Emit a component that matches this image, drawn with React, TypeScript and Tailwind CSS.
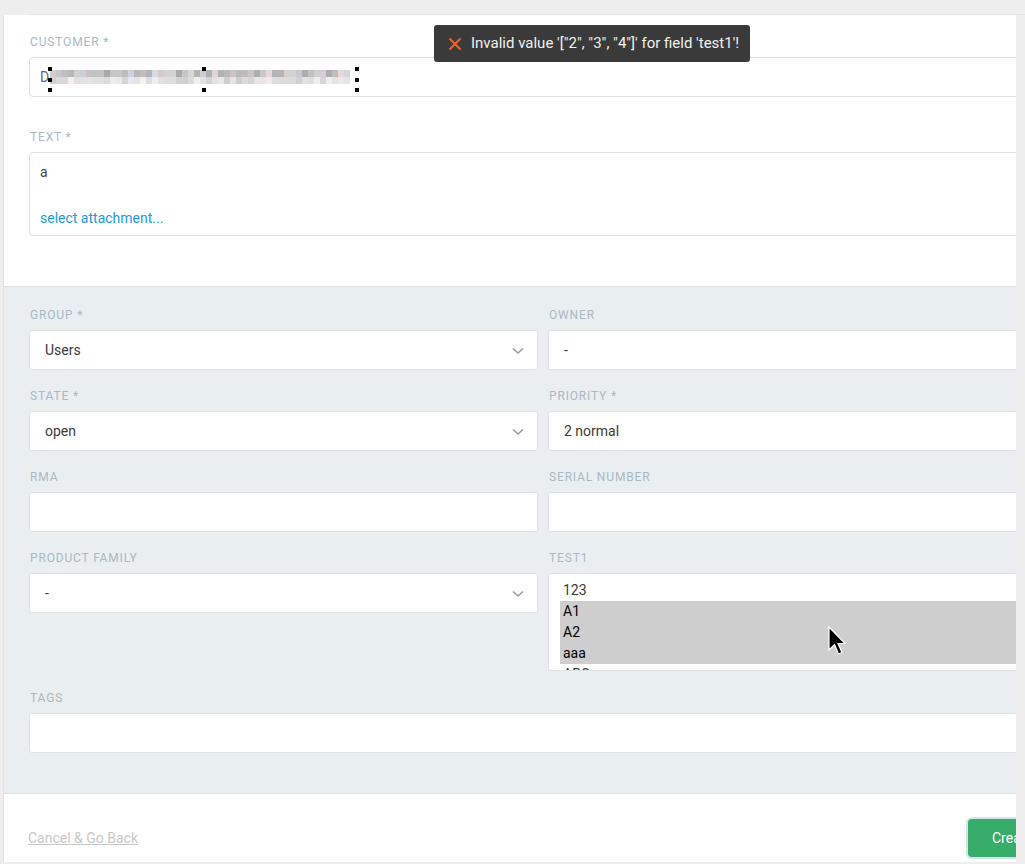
import React from "react";

const font = { fontFamily: "Roboto, 'Noto Sans', sans-serif" };

function Chevron() {
  return (
    <svg width="12" height="8" viewBox="0 0 12 8" className="absolute right-[13px] top-[16px]">
      <path d="M1 1.5 L6 6 L11 1.5" fill="none" stroke="#9a9a9a" strokeWidth="1.6" />
    </svg>
  );
}

function Label({ children }: { children: React.ReactNode }) {
  return (
    <div className="h-[16px] leading-[16px] text-[12px] uppercase tracking-[0.07em] text-[#a9b9c3] pl-[1px]">
      {children}
    </div>
  );
}

function Field({
  label,
  value,
  select,
}: {
  label: string;
  value?: string;
  select?: boolean;
}) {
  return (
    <div className="flex flex-col gap-[7px]">
      <Label>{label}</Label>
      <div className="relative h-[40px] bg-white border border-[#dde2e5] rounded-[3px] pl-[15px] flex items-center text-[14px] text-[#3d3935]">
        {value}
        {select && <Chevron />}
      </div>
    </div>
  );
}

function Blur() {
  const cols = 50;
  const rows = 2;
  const cells: React.ReactNode[] = [];
  for (let r = 0; r < rows; r++) {
    for (let c = 0; c < cols; c++) {
      const seed = Math.sin((c + 1) * 12.9898 + (r + 1) * 78.233) * 43758.5453;
      const f = seed - Math.floor(seed);
      const base = r === 0 ? 168 : 205;
      const v = Math.round(base + f * 50 * (r === 0 ? 1 : 0.7));
      const tint = Math.round(f * 12);
      cells.push(
        <div
          key={r + "-" + c}
          style={{
            width: 6,
            height: 7,
            background: `rgb(${Math.min(250, v + (c % 3 === 0 ? tint : 0))},${Math.min(250, v)},${Math.min(252, v + (c % 4 === 1 ? tint : 0))})`,
          }}
        />
      );
    }
  }
  return (
    <div className="grid grid-cols-[repeat(50,6px)] w-[300px]">{cells}</div>
  );
}

function Handle() {
  return <div className="w-[4px] h-[4px] bg-black" />;
}

export default function App() {
  return (
    <div className="relative w-[1025px] h-[864px] bg-[#eeeeee] overflow-hidden" style={font}>
      <div className="absolute left-0 right-0 top-[14px] h-[1px] bg-[#e4e4e4] ml-[30px]" />
      <div className="ml-[3px] mt-[15px] w-[1013px] h-[847px] bg-white border-l border-[#e3e3e3] overflow-hidden flex flex-col">
        {/* top white section */}
        <div className="w-[1060px] pl-[25px] pt-[19px] h-[271px] flex flex-col">
          <Label>Customer *</Label>
          <div className="mt-[7px] relative h-[40px] border border-[#e0e0e0] rounded-[4px] flex items-center pl-[10px] text-[14px] text-[#444]">
            <span className="text-[#5a6a85]">D</span>
            <div className="ml-[1px]">
              <Blur />
            </div>
            <div className="absolute left-[18px] top-[9px] w-[311px] h-[25px] flex justify-between">
              <div className="flex flex-col justify-between">
                <Handle />
                <Handle />
                <Handle />
              </div>
              <div className="flex flex-col justify-between">
                <Handle />
                <Handle />
              </div>
              <div className="flex flex-col justify-between">
                <Handle />
                <Handle />
                <Handle />
              </div>
            </div>
          </div>
          <div className="mt-[32px]">
            <Label>Text *</Label>
          </div>
          <div className="mt-[7px] h-[84px] border border-[#e0e0e0] rounded-[4px] pl-[10px] pt-[9px] flex flex-col text-[14px]">
            <div className="text-[#444] h-[20px] leading-[20px]">a</div>
            <div className="mt-[26px] text-[#1e9ad6] leading-[20px]">select attachment...</div>
          </div>
        </div>

        {/* gray section */}
        <div className="w-[1060px] bg-[#e9eef1] border-t border-b border-[#dfe4e7] pl-[25px] pt-[20px] pb-[40px] flex flex-col">
          <div className="grid grid-cols-[509px_509px] gap-x-[10px] gap-y-[18px]">
            <Field label="Group *" value="Users" select />
            <Field label="Owner" value="-" />
            <Field label="State *" value="open" select />
            <Field label="Priority *" value="2 normal" />
            <Field label="RMA" />
            <Field label="Serial number" />
            <Field label="Product family" value="-" select />
            <div className="flex flex-col gap-[7px]">
              <Label>test1</Label>
              <div className="h-[98px] bg-white border border-[#dde2e5] rounded-[3px] pl-[11px] pt-[6px] overflow-hidden text-[14px]">
                <div className="h-[21px] leading-[21px] pl-[3px] text-[#3d3935]">123</div>
                <div className="h-[21px] leading-[21px] pl-[3px] bg-[#cecece] text-black">A1</div>
                <div className="h-[21px] leading-[21px] pl-[3px] bg-[#cecece] text-black">A2</div>
                <div className="h-[21px] leading-[21px] pl-[3px] bg-[#cecece] text-black">aaa</div>
                <div className="h-[21px] leading-[21px] pl-[3px] text-[#3d3935]">ABC</div>
              </div>
            </div>
          </div>
          <div className="mt-[19px] flex flex-col gap-[7px]">
            <Label>Tags</Label>
            <div className="h-[40px] bg-white border border-[#dde2e5] rounded-[3px]" />
          </div>
        </div>

        {/* footer */}
        <div className="w-[1060px] flex-1 flex items-start pl-[24px] pt-[22px]">
          <a className="mt-[12px] text-[14px] text-[#c8c8c8] underline">Cancel &amp; Go Back</a>
        </div>
      </div>

      {/* create button, clipped by panel edge */}
      <div className="absolute left-[966px] top-[817px] w-[50px] h-[42px] overflow-hidden">
        <div className="w-[110px] h-[42px] rounded-[6px] border-[2px] border-[#cfe5ef] bg-[#37ad69] text-white text-[14px] flex items-center pl-[24px]">
          Create
        </div>
      </div>

      {/* toast */}
      <div className="absolute left-[434px] top-[25px] w-[316px] h-[37px] bg-[#3a3a3a] rounded-[3px] flex items-center pl-[14px] text-[15px] text-[#f0f0f0]">
        <svg width="14" height="14" viewBox="0 0 14 14">
          <path d="M1.5 1.5 L12.5 12.5 M12.5 1.5 L1.5 12.5" stroke="#f0612b" strokeWidth="2" />
        </svg>
        <span className="ml-[9px] whitespace-nowrap">Invalid value '["2", "3", "4"]' for field 'test1'!</span>
      </div>

      {/* mouse cursor */}
      <svg className="absolute left-[828px] top-[626px]" width="20" height="32" viewBox="0 0 20 32">
        <path d="M1 1 L1 24 L6.5 18.5 L10.5 28 L14 26.5 L10 17.5 L17 17.5 Z" fill="#000" stroke="#fff" strokeWidth="1.2" />
      </svg>
    </div>
  );
}
